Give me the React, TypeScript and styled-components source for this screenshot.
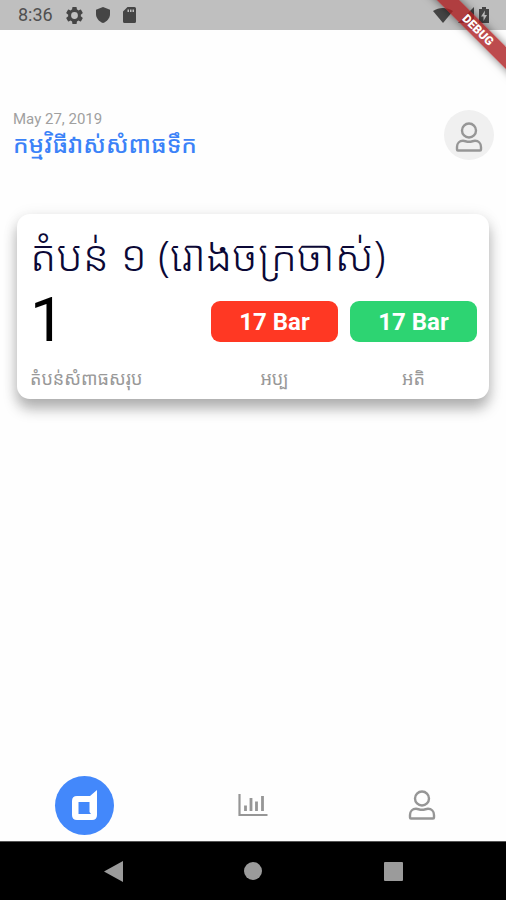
import React from "react";
import styled, { createGlobalStyle } from "styled-components";

const khmer = `"Noto Sans Khmer", "Khmer OS", Roboto, sans-serif`;

const GlobalStyle = createGlobalStyle`
  * { box-sizing: border-box; }
  body { margin: 0; background: #fefefe; font-family: Roboto, "Noto Sans Khmer", sans-serif; }
  button { border: 0; padding: 0; background: none; cursor: pointer; font: inherit; color: inherit; }
  svg { display: block; }
`;

const Screen = styled.div`
  position: relative;
  display: flex;
  flex-direction: column;
  min-height: 100vh;
  overflow: hidden;
`;

const StatusBar = styled.header`
  display: flex;
  align-items: center;
  justify-content: space-between;
  height: 30px;
  padding: 0 17px 0 18px;
  background: #bfbfbf;
  color: #454545;
`;

const StatusGroup = styled.div<{ $gap: number }>`
  display: flex;
  align-items: center;
  gap: ${(p) => p.$gap}px;
`;

const Clock = styled.time`
  font-size: 18px;
  line-height: 32px;
  color: #505050;
`;

const BannerCorner = styled.div`
  position: absolute;
  top: 0;
  right: 0;
  width: 90px;
  height: 90px;
  overflow: hidden;
  pointer-events: none;
`;

const Banner = styled.div`
  position: absolute;
  top: 22px;
  left: -8px;
  width: 140px;
  height: 16px;
  transform: rotate(45deg);
  background: rgba(172, 30, 32, 0.8);
  box-shadow: 0 0 8px rgba(0, 0, 0, 0.5);
  color: #fff;
  font-size: 12px;
  font-weight: 900;
  line-height: 16px;
  text-align: center;
`;

const Content = styled.main`
  flex: 1;
  display: flex;
  flex-direction: column;
  gap: 54px;
  padding-top: 80px;
`;

const PageHeader = styled.div`
  display: flex;
  align-items: center;
  justify-content: space-between;
  padding: 0 12px 0 13px;
`;

const PageDate = styled.p`
  margin: 0;
  font-size: 15px;
  line-height: 18px;
  color: #a0a0a0;
`;

const PageTitle = styled.h1`
  margin: 0;
  font-family: ${khmer};
  font-size: 24px;
  font-weight: 500;
  line-height: 32px;
  color: #3b82f8;
`;

const Avatar = styled.button`
  display: grid;
  place-items: center;
  width: 50px;
  height: 50px;
  padding-top: 3px;
  border-radius: 50%;
  background: #f0f0f0;
  color: #969696;
`;

const Card = styled.section`
  margin: 0 17px;
  padding: 12px 12px 7px 13px;
  border-radius: 13px;
  background: #fff;
  box-shadow: 0 10px 14px rgba(0, 0, 0, 0.28), 0 2px 16px rgba(0, 0, 0, 0.09);
`;

const CardTitle = styled.h2`
  margin: 0 0 4px;
  font-family: ${khmer};
  font-size: 43px;
  font-weight: 340;
  line-height: 58px;
  color: #0b0836;
  white-space: nowrap;
`;

const Readings = styled.div`
  display: grid;
  grid-template-columns: 1fr 127px 127px;
  column-gap: 12px;
  align-items: center;
`;

const ZoneCount = styled.div`
  font-size: 62px;
  line-height: 64px;
  color: #000;
`;

const Reading = styled.div<{ $color: string }>`
  height: 41px;
  margin-top: 3px;
  border-radius: 9px;
  background: ${(p) => p.$color};
  color: #fff;
  font-size: 24px;
  font-weight: 700;
  line-height: 43px;
  text-align: center;
`;

const Caption = styled.div<{ $center?: boolean }>`
  padding-top: 12px;
  font-family: ${khmer};
  font-size: 18px;
  line-height: 28px;
  color: #999;
  text-align: ${(p) => (p.$center ? "center" : "left")};
`;

const TabBar = styled.nav`
  display: grid;
  grid-template-columns: repeat(3, 1fr);
  justify-items: center;
  align-items: center;
  height: 72px;
`;

const Tab = styled.button<{ $active?: boolean }>`
  display: grid;
  place-items: center;
  width: 59px;
  height: 59px;
  border-radius: 50%;
  background: ${(p) => (p.$active ? "#4388fb" : "transparent")};
  color: ${(p) => (p.$active ? "#fff" : "#969696")};
`;

const SystemBar = styled.footer`
  display: grid;
  grid-template-columns: repeat(3, 140px);
  justify-content: center;
  justify-items: center;
  align-items: center;
  height: 59px;
  border-top: 1px solid #555;
  background: #000;
  color: #9b9b9b;
`;

const PersonIcon = () => (
  <svg width="28" height="30" viewBox="0 0 28 30" fill="none" stroke="currentColor" strokeWidth="2.4" strokeLinejoin="round" aria-hidden="true">
    <circle cx="14" cy="8.500" r="7" />
    <path d="M2 27.500V25C2 21.200 4.500 18.800 8 18.800C10 18.800 11.200 19.800 14 19.800S18 18.800 20 18.800C23.500 18.800 26 21.200 26 25V27.500Q26 28.500 25 28.500H3Q2 28.500 2 27.500Z" />
  </svg>
);

const ChartIcon = () => (
  <svg width="30" height="24" viewBox="0 0 30 24" fill="none" stroke="currentColor" aria-hidden="true">
    <path d="M1.500 1V22H29.500" strokeWidth="2.200" />
    <path d="M7.500 12.500V18M13 5V18M18.500 8.500V18M24.500 3V18" strokeWidth="2.800" />
  </svg>
);

const LogoIcon = () => (
  <svg width="28" height="32" viewBox="0 0 28 32" fill="currentColor" fillRule="evenodd" aria-hidden="true">
    <path d="M20 7L27 1V26Q27 31 22 31H7Q2 31 2 26V12Q2 7 7 7ZM8.500 13V25H21L19.500 23V13Z" />
  </svg>
);

const GearIcon = () => (
  <svg width="17" height="17" viewBox="2 2 20 20" fill="currentColor" fillRule="evenodd" aria-hidden="true">
    <path d="M19.430 12.980a7.800 7.800 0 0 0 0-1.960l2.110-1.650a.5.5 0 0 0 .12-.64l-2-3.460a.5.5 0 0 0-.61-.22l-2.490 1a7.300 7.300 0 0 0-1.690-.98l-.38-2.650A.5.5 0 0 0 14 2h-4a.5.5 0 0 0-.49.420l-.38 2.650a7.700 7.700 0 0 0-1.690.98l-2.490-1a.5.5 0 0 0-.61.220l-2 3.460a.5.5 0 0 0 .12.640l2.110 1.650a7.900 7.900 0 0 0 0 1.960l-2.110 1.650a.5.5 0 0 0-.12.640l2 3.460a.5.5 0 0 0 .61.220l2.490-1a7.300 7.300 0 0 0 1.690.98l.38 2.650A.5.5 0 0 0 10 22h4a.5.5 0 0 0 .49-.42l.38-2.650a7.700 7.700 0 0 0 1.690-.98l2.490 1a.5.5 0 0 0 .61-.22l2-3.460a.5.5 0 0 0-.12-.64ZM12 16a4 4 0 1 1 0-8 4 4 0 0 1 0 8Z" />
  </svg>
);

const ShieldIcon = () => (
  <svg width="14" height="16" viewBox="0 0 14 16" fill="currentColor" aria-hidden="true">
    <path d="M7 0L14 2.700V7C14 11 11 14.700 7 16C3 14.700 0 11 0 7V2.700Z" />
  </svg>
);

const CardIcon = () => (
  <svg width="13" height="16" viewBox="0 0 13 16" fill="currentColor" fillRule="evenodd" aria-hidden="true">
    <path d="M4.500 0H11.500Q13 0 13 1.500V14.500Q13 16 11.500 16H1.500Q0 16 0 14.500V4.500ZM4.500 2.500V5H6V2.500ZM7 2.500V5H8.500V2.500ZM9.500 2.500V5H11V2.500Z" />
  </svg>
);

const WifiIcon = () => (
  <svg width="20" height="15" viewBox="0 0 20 15" fill="currentColor" aria-hidden="true">
    <path d="M0 3C6-1 14-1 20 3L10 15Z" />
  </svg>
);

const SignalIcon = () => (
  <svg width="16" height="16" viewBox="0 0 16 16" fill="currentColor" aria-hidden="true">
    <path d="M0 16L16 0V16Z" />
  </svg>
);

const BatteryIcon = () => (
  <svg width="10" height="16" viewBox="0 0 10 16" fill="currentColor" fillRule="evenodd" aria-hidden="true">
    <path d="M3 0H7V2H10V16H0V2H3ZM6 3.500L2 9.500H4.500V14L8 8H5.500Z" />
  </svg>
);

const readings = [
  { value: "17 Bar", color: "#ff3823" },
  { value: "17 Bar", color: "#2dd472" },
];

export default function App() {
  return (
    <>
      <GlobalStyle />
      <Screen>
        <StatusBar>
          <StatusGroup $gap={13}>
            <Clock>8:36</Clock>
            <GearIcon />
            <ShieldIcon />
            <CardIcon />
          </StatusGroup>
          <StatusGroup $gap={5}>
            <WifiIcon />
            <SignalIcon />
            <BatteryIcon />
          </StatusGroup>
        </StatusBar>
        <BannerCorner>
          <Banner>DEBUG</Banner>
        </BannerCorner>
        <Content>
          <PageHeader>
            <div>
              <PageDate>May 27, 2019</PageDate>
              <PageTitle>កម្មវិធីវាស់សំពាធទឹក</PageTitle>
            </div>
            <Avatar aria-label="Account">
              <PersonIcon />
            </Avatar>
          </PageHeader>
          <Card>
            <CardTitle>តំបន់ ១ (រោងចក្រចាស់)</CardTitle>
            <Readings>
              <ZoneCount>1</ZoneCount>
              {readings.map((r) => (
                <Reading key={r.color} $color={r.color}>
                  {r.value}
                </Reading>
              ))}
              <Caption>តំបន់សំពាធសរុប</Caption>
              <Caption $center>អប្ប</Caption>
              <Caption $center>អតិ</Caption>
            </Readings>
          </Card>
        </Content>
        <TabBar>
          <Tab $active aria-label="Home">
            <LogoIcon />
          </Tab>
          <Tab aria-label="Statistics">
            <ChartIcon />
          </Tab>
          <Tab aria-label="Profile">
            <PersonIcon />
          </Tab>
        </TabBar>
        <SystemBar>
          <button aria-label="Back">
            <svg width="19" height="21" viewBox="0 0 19 21" fill="currentColor">
              <path d="M0 10.500L19 0V21Z" />
            </svg>
          </button>
          <button aria-label="Home screen">
            <svg width="18" height="18" viewBox="0 0 18 18" fill="currentColor">
              <circle cx="9" cy="9" r="9" />
            </svg>
          </button>
          <button aria-label="Recent apps">
            <svg width="19" height="19" viewBox="0 0 19 19" fill="currentColor">
              <rect width="19" height="19" rx="1" />
            </svg>
          </button>
        </SystemBar>
      </Screen>
    </>
  );
}
